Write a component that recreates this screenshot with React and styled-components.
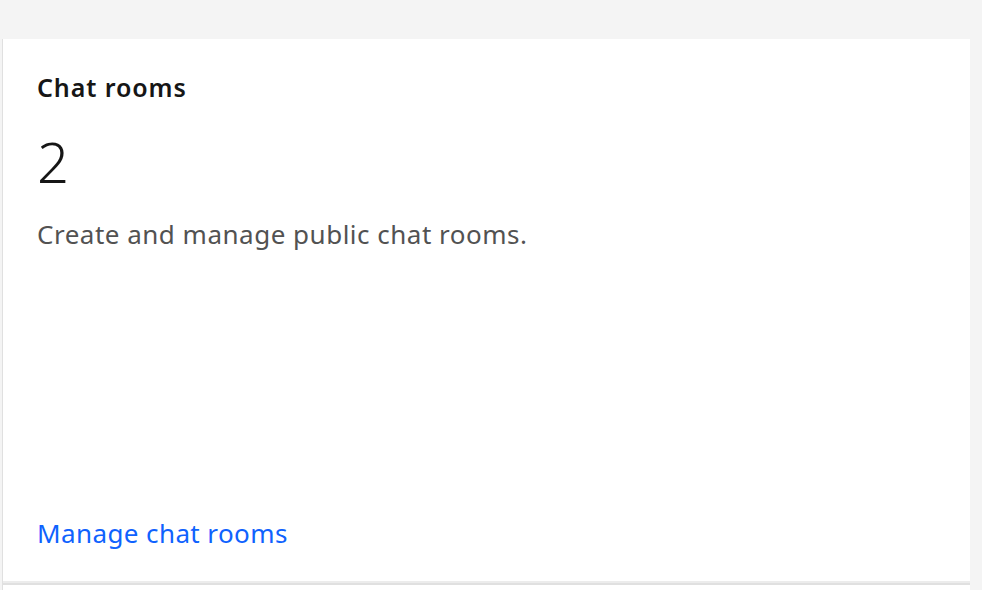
import React from 'react';
import styled, { createGlobalStyle } from 'styled-components';

const GlobalStyle = createGlobalStyle`
  html, body {
    margin: 0;
    padding: 0;
    background: #f4f4f4;
    font-family: 'Noto Sans', 'Open Sans', sans-serif;
  }
`;

const Page = styled.div`
  height: 590px;
  padding-top: 39px;
  padding-left: 2px;
  padding-right: 12px;
  box-sizing: border-box;
  overflow: hidden;
`;

const Grid = styled.div`
  display: flex;
  flex-direction: column;
  border-left: 1px solid #e0e0e0;
  height: 100%;
`;

const Tile = styled.div`
  display: flex;
  flex-direction: column;
  background: #ffffff;
  height: 542px;
  flex-shrink: 0;
  padding: 32px 34px 31px 34px;
  box-sizing: border-box;
`;

const Divider = styled.div`
  height: 2px;
  flex-shrink: 0;
  background: #e0e0e0;
  border-top: 2px solid #ececec;
`;

const NextTile = styled.div`
  flex: 1;
  background: #ffffff;
`;

const Title = styled.h3`
  margin: 0;
  font-size: 25px;
  font-weight: 600;
  line-height: 32px;
  letter-spacing: 0.9px;
  color: #161616;
`;

const Count = styled.div`
  margin-top: 26px;
  font-size: 56px;
  font-weight: 350;
  line-height: 64px;
  color: #161616;
`;

const Description = styled.p`
  margin: 24px 0 0;
  font-size: 26px;
  line-height: 34px;
  letter-spacing: 0.5px;
  color: #525252;
`;

const Link = styled.a`
  margin-top: auto;
  align-self: flex-start;
  font-size: 26px;
  line-height: 34px;
  letter-spacing: 0.4px;
  color: #0f62fe;
  text-decoration: none;
  cursor: pointer;
`;

export default function App() {
  return (
    <>
      <GlobalStyle />
      <Page>
        <Grid>
          <Tile>
            <Title>Chat rooms</Title>
            <Count>2</Count>
            <Description>Create and manage public chat rooms.</Description>
            <Link href="#">Manage chat rooms</Link>
          </Tile>
          <Divider />
          <NextTile />
        </Grid>
      </Page>
    </>
  );
}
